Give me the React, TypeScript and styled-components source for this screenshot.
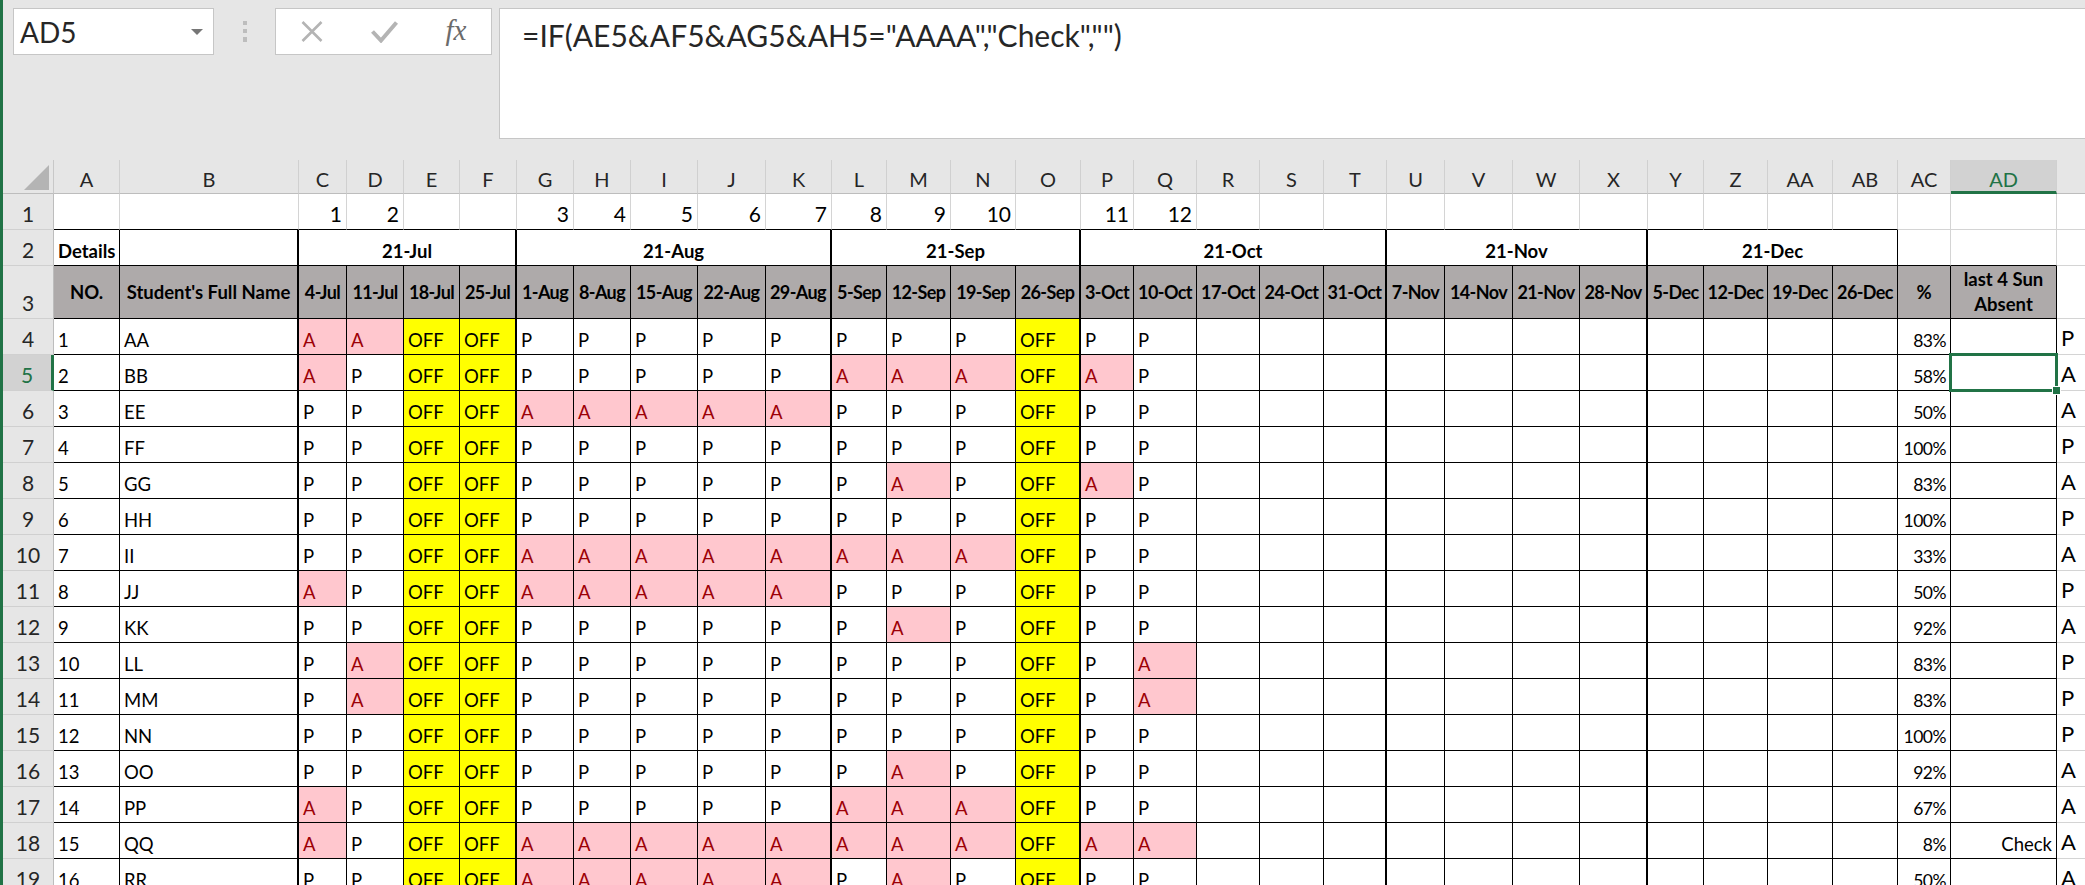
import React from "react";
import styled, { createGlobalStyle } from "styled-components";

const GlobalStyle = createGlobalStyle`
  html, body {
    margin: 0;
    padding: 0;
    background: #fff;
    overflow: hidden;
  }
  body {
    font-family: Lato, "Liberation Sans", sans-serif;
  }
`;

const GREEN = "#217346";

const Window = styled.div`
  width: 2085px;
  height: 885px;
  box-sizing: border-box;
  overflow: hidden;
  border-left: 3px solid ${GREEN};
  background: #e6e6e6;
  display: flex;
  flex-direction: column;
`;

const Toolbar = styled.div`
  height: 160px;
  flex: none;
  box-sizing: border-box;
  padding: 8px 0 0 10px;
  display: flex;
  align-items: flex-start;
`;

const NameBox = styled.div`
  width: 201px;
  height: 47px;
  box-sizing: border-box;
  border: 1px solid #c6c6c6;
  background: #fff;
  display: flex;
  align-items: center;
  justify-content: space-between;
  padding: 0 10px 0 6px;
  font-size: 28px;
  line-height: 1;
  color: #262626;
`;

const DropArrow = styled.span`
  width: 0;
  height: 0;
  border-left: 6px solid transparent;
  border-right: 6px solid transparent;
  border-top: 6px solid #767676;
`;

const Divider = styled.div`
  width: 61px;
  height: 47px;
  display: flex;
  align-items: center;
  justify-content: center;
`;

const FxGroup = styled.div`
  width: 217px;
  height: 47px;
  box-sizing: border-box;
  border: 1px solid #c6c6c6;
  background: #fff;
  display: grid;
  grid-template-columns: repeat(3, 72px);
  align-items: center;
  justify-items: center;
`;

const FxText = styled.span`
  font-family: "Liberation Serif", "DejaVu Serif", serif;
  font-style: italic;
  font-size: 29px;
  line-height: 1;
  color: #6b6b6b;
  margin-top: -2px;
`;

const FormulaInput = styled.div`
  flex: 1;
  height: 131px;
  margin-left: 7px;
  box-sizing: border-box;
  border: 1px solid #c6c6c6;
  border-right: none;
  background: #fff;
  padding: 11px 0 0 22px;
  font-size: 30px;
  line-height: 30px;
  color: #262626;
  white-space: pre;
`;

const widths = [
  66, 179, 48, 57, 56, 57, 57, 57, 67, 68, 66, 55, 64, 65, 65, 53, 63, 63, 64,
  63, 58, 68, 67, 68, 56, 64, 65, 65, 53, 106, 60,
];

const letters = [
  "A", "B", "C", "D", "E", "F", "G", "H", "I", "J", "K", "L", "M", "N", "O",
  "P", "Q", "R", "S", "T", "U", "V", "W", "X", "Y", "Z", "AA", "AB", "AC",
  "AD", "",
];

const Sheet = styled.div`
  position: relative;
  flex: none;
  display: grid;
  grid-template-columns: 51px ${widths.map((w) => `${w}px`).join(" ")};
  grid-template-rows: 34px 36px 36px 53px repeat(16, 36px);
  background: #fff;
`;

const Corner = styled.div`
  background: #e6e6e6;
  border-right: 1px solid #c8c8c8;
  border-bottom: 1px solid #bdbdbd;
  box-sizing: border-box;
  display: flex;
  align-items: flex-end;
  justify-content: flex-end;
  padding: 0 4px 3px 0;
`;

const ColHeader = styled.div<{ $active?: boolean }>`
  box-sizing: border-box;
  background: ${(p) => (p.$active ? "#d2d2d2" : "#e6e6e6")};
  color: ${(p) => (p.$active ? GREEN : "#262626")};
  border-right: 1px solid #d0d0d0;
  border-bottom: ${(p) => (p.$active ? `3px solid ${GREEN}` : "1px solid #bdbdbd")};
  display: flex;
  align-items: flex-end;
  justify-content: center;
  padding-bottom: ${(p) => (p.$active ? 2 : 4)}px;
  font-size: 20px;
  line-height: 1;
`;

const RowHeader = styled.div<{ $active?: boolean }>`
  box-sizing: border-box;
  background: ${(p) => (p.$active ? "#d2d2d2" : "#e6e6e6")};
  color: ${(p) => (p.$active ? GREEN : "#262626")};
  border-bottom: 1px solid #d0d0d0;
  border-right: ${(p) => (p.$active ? `3px solid ${GREEN}` : "1px solid #bdbdbd")};
  display: flex;
  align-items: flex-end;
  justify-content: center;
  padding-bottom: 5px;
  font-size: 21px;
  line-height: 1;
`;

type Edge = "none" | "light" | "black" | "thick";

const edge = (e: Edge) =>
  e === "none"
    ? "none"
    : e === "light"
    ? "1px solid #d4d4d4"
    : e === "black"
    ? "1px solid #000"
    : "2px solid #000";

interface CellProps {
  $bg?: string;
  $color?: string;
  $align?: "left" | "right" | "center";
  $middle?: boolean;
  $bold?: boolean;
  $size?: number;
  $spacing?: number;
  $right?: Edge;
  $bottom?: Edge;
  $span?: number;
  $wrap?: boolean;
}

const Cell = styled.div<CellProps>`
  box-sizing: border-box;
  grid-column: span ${(p) => p.$span ?? 1};
  display: flex;
  align-items: ${(p) => (p.$middle ? "center" : "flex-end")};
  justify-content: ${(p) =>
    p.$align === "right" ? "flex-end" : p.$align === "center" ? "center" : "flex-start"};
  text-align: ${(p) => p.$align ?? "left"};
  padding: 0 4px ${(p) => (p.$middle ? 0 : 5)}px 4px;
  background: ${(p) => p.$bg ?? "#fff"};
  color: ${(p) => p.$color ?? "#000"};
  font-size: ${(p) => p.$size ?? 18.5}px;
  font-weight: ${(p) => (p.$bold ? 700 : 400)};
  letter-spacing: ${(p) => p.$spacing ?? 0}px;
  line-height: ${(p) => (p.$wrap ? "25px" : 1)};
  white-space: ${(p) => (p.$wrap ? "normal" : "nowrap")};
  border-right: ${(p) => edge(p.$right ?? "light")};
  border-bottom: ${(p) => edge(p.$bottom ?? "light")};
`;

const Selection = styled.div`
  position: absolute;
  left: 1946px;
  top: 193px;
  width: 109px;
  height: 39px;
  box-sizing: border-box;
  border: 3px solid ${GREEN};
  pointer-events: none;
`;

const Handle = styled.div`
  position: absolute;
  right: -6px;
  bottom: -6px;
  width: 9px;
  height: 9px;
  background: ${GREEN};
  border: 1px solid #fff;
  box-sizing: border-box;
`;

const thick = new Set([1, 5, 10, 14, 19, 23]);

const dates = [
  "4-Jul", "11-Jul", "18-Jul", "25-Jul", "1-Aug", "8-Aug", "15-Aug", "22-Aug",
  "29-Aug", "5-Sep", "12-Sep", "19-Sep", "26-Sep", "3-Oct", "10-Oct", "17-Oct",
  "24-Oct", "31-Oct", "7-Nov", "14-Nov", "21-Nov", "28-Nov", "5-Dec", "12-Dec",
  "19-Dec", "26-Dec",
];

const sessionNo: Record<number, string> = {
  2: "1", 3: "2", 6: "3", 7: "4", 8: "5", 9: "6", 10: "7", 11: "8", 12: "9",
  13: "10", 15: "11", 16: "12",
};

const months: [string, number, Edge][] = [
  ["21-Jul", 4, "thick"],
  ["21-Aug", 5, "thick"],
  ["21-Sep", 4, "thick"],
  ["21-Oct", 5, "thick"],
  ["21-Nov", 4, "thick"],
  ["21-Dec", 4, "black"],
];

const students: [string, string, string, string, string][] = [
  ["AA", "AAOOPPPPPPPPOPP", "83%", "", "P"],
  ["BB", "APOOPPPPPAAAOAP", "58%", "", "A"],
  ["EE", "PPOOAAAAAPPPOPP", "50%", "", "A"],
  ["FF", "PPOOPPPPPPPPOPP", "100%", "", "P"],
  ["GG", "PPOOPPPPPPAPOAP", "83%", "", "A"],
  ["HH", "PPOOPPPPPPPPOPP", "100%", "", "P"],
  ["II", "PPOOAAAAAAAAOPP", "33%", "", "A"],
  ["JJ", "APOOAAAAAPPPOPP", "50%", "", "P"],
  ["KK", "PPOOPPPPPPAPOPP", "92%", "", "A"],
  ["LL", "PAOOPPPPPPPPOPA", "83%", "", "P"],
  ["MM", "PAOOPPPPPPPPOPA", "83%", "", "P"],
  ["NN", "PPOOPPPPPPPPOPP", "100%", "", "P"],
  ["OO", "PPOOPPPPPPAPOPP", "92%", "", "A"],
  ["PP", "APOOPPPPPAAAOPP", "67%", "", "A"],
  ["QQ", "APOOAAAAAAAAOAA", "8%", "Check", "A"],
  ["RR", "PPOOAAAAAPAPOPP", "50%", "", "A"],
];

const tableEdge = (c: number): Edge => (thick.has(c) ? "thick" : "black");

function CrossIcon() {
  return (
    <svg width="22" height="21" viewBox="0 0 22 21">
      <path d="M1.5 1 L20.5 20 M20.5 1 L1.5 20" stroke="#b4b4b4" strokeWidth="2.6" />
    </svg>
  );
}

function CheckIcon() {
  return (
    <svg width="27" height="22" viewBox="0 0 27 22">
      <path d="M1.5 10.5 L10 19.5 L25.5 1.5" fill="none" stroke="#b4b4b4" strokeWidth="4" />
    </svg>
  );
}

function Dots() {
  return (
    <svg width="4" height="22" viewBox="0 0 4 22">
      <rect x="0" y="0" width="4" height="4" fill="#bdbdbd" />
      <rect x="0" y="8" width="4" height="4" fill="#bdbdbd" />
      <rect x="0" y="16" width="4" height="5" fill="#bdbdbd" />
    </svg>
  );
}

function CornerMark() {
  return (
    <svg width="25" height="25" viewBox="0 0 25 25">
      <polygon points="25,0 25,25 0,25" fill="#b4b4b4" />
    </svg>
  );
}

function StatusCell({ v, c }: { v: string; c: number }) {
  if (v === "A") {
    return (
      <Cell $bg="#ffc7ce" $color="#9c0006" $right={tableEdge(c)} $bottom="black">
        A
      </Cell>
    );
  }
  if (v === "O") {
    return (
      <Cell $bg="#ffff00" $right={tableEdge(c)} $bottom="black">
        OFF
      </Cell>
    );
  }
  return (
    <Cell $right={tableEdge(c)} $bottom="black">
      P
    </Cell>
  );
}

export default function App() {
  return (
    <Window>
      <GlobalStyle />
      <Toolbar>
        <NameBox>
          <span>AD5</span>
          <DropArrow />
        </NameBox>
        <Divider>
          <Dots />
        </Divider>
        <FxGroup>
          <CrossIcon />
          <CheckIcon />
          <FxText>fx</FxText>
        </FxGroup>
        <FormulaInput>=IF(AE5&amp;AF5&amp;AG5&amp;AH5="AAAA","Check","")</FormulaInput>
      </Toolbar>

      <Sheet>
        <Corner>
          <CornerMark />
        </Corner>
        {letters.map((l, i) => (
          <ColHeader key={`h${i}`} $active={l === "AD"}>
            {l}
          </ColHeader>
        ))}

        {/* row 1: session numbers */}
        <RowHeader>1</RowHeader>
        {letters.map((_, c) => (
          <Cell
            key={`r1${c}`}
            $align="right"
            $size={21}
            $right={c === 30 ? "none" : "light"}
            $bottom={c <= 27 ? "black" : "light"}
          >
            {sessionNo[c] ?? ""}
          </Cell>
        ))}

        {/* row 2: months */}
        <RowHeader>2</RowHeader>
        <Cell $bold $right="black" $bottom="black">
          Details
        </Cell>
        <Cell $right="thick" $bottom="black" />
        {months.map(([m, span, r]) => (
          <Cell key={m} $span={span} $bold $align="center" $right={r} $bottom="black">
            {m}
          </Cell>
        ))}
        <Cell $bottom="black" />
        <Cell $bottom="black" />
        <Cell $right="none" />

        {/* row 3: column titles */}
        <RowHeader>3</RowHeader>
        <Cell $bg="#aeaaaa" $bold $middle $align="center" $right="black" $bottom="black">
          NO.
        </Cell>
        <Cell $bg="#aeaaaa" $bold $middle $align="center" $right="thick" $bottom="black">
          Student's Full Name
        </Cell>
        {dates.map((d, i) => (
          <Cell
            key={d}
            $bg="#aeaaaa"
            $bold
            $middle
            $align="center"
            $size={18}
            $spacing={-0.6}
            $right={tableEdge(i + 2)}
            $bottom="black"
          >
            {d}
          </Cell>
        ))}
        <Cell $bg="#aeaaaa" $bold $middle $align="center" $right="black" $bottom="black">
          %
        </Cell>
        <Cell $bg="#aeaaaa" $bold $middle $wrap $align="center" $right="black" $bottom="black">
          last 4 Sun Absent
        </Cell>
        <Cell $right="none" />

        {/* student rows */}
        {students.map(([name, marks, pct, check, flag], r) => (
          <React.Fragment key={name}>
            <RowHeader $active={r === 1}>{r + 4}</RowHeader>
            <Cell $right="black" $bottom="black">
              {r + 1}
            </Cell>
            <Cell $right="thick" $bottom="black">
              {name}
            </Cell>
            {marks.split("").map((v, i) => (
              <StatusCell key={i} v={v} c={i + 2} />
            ))}
            {Array.from({ length: 11 }, (_, i) => (
              <Cell key={`e${i}`} $right={tableEdge(i + 17)} $bottom="black" />
            ))}
            <Cell $align="right" $size={17.5} $spacing={-0.5} $right="black" $bottom="black">
              {pct}
            </Cell>
            <Cell $align="right" $right="black" $bottom="black">
              {check}
            </Cell>
            <Cell $size={22} $right="none">
              {flag}
            </Cell>
          </React.Fragment>
        ))}

        <Selection>
          <Handle />
        </Selection>
      </Sheet>
    </Window>
  );
}
